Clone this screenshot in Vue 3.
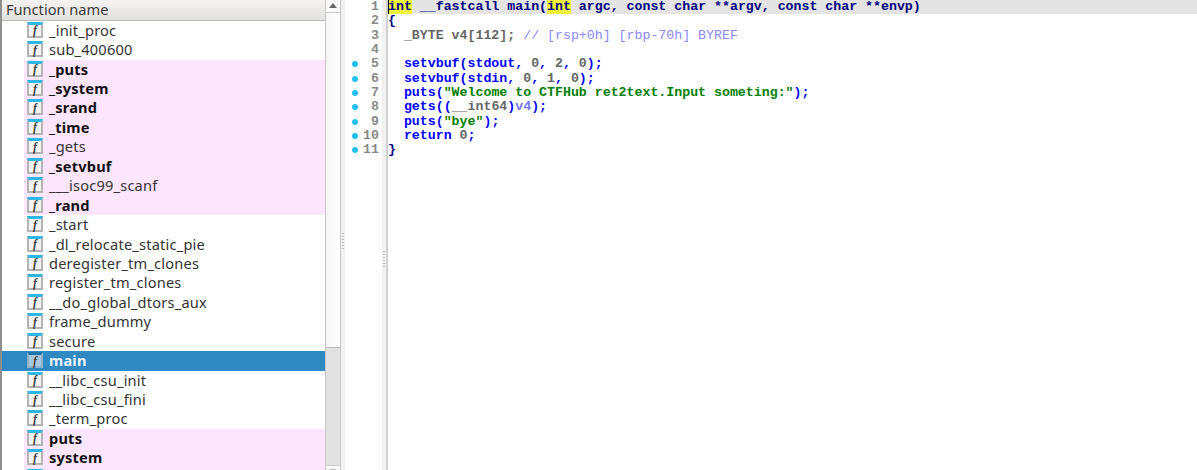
<script setup>
const fns = [
  ['_init_proc', ''], ['sub_400600', ''], ['_puts', 'ext'], ['_system', 'ext'], ['_srand', 'ext'],
  ['_time', 'ext'], ['_gets', 'pink'], ['_setvbuf', 'ext'], ['___isoc99_scanf', 'pink'], ['_rand', 'ext'],
  ['_start', ''], ['_dl_relocate_static_pie', ''], ['deregister_tm_clones', ''], ['register_tm_clones', ''],
  ['__do_global_dtors_aux', ''], ['frame_dummy', ''], ['secure', ''], ['main', 'sel'], ['__libc_csu_init', ''],
  ['__libc_csu_fini', ''], ['_term_proc', ''], ['puts', 'ext'], ['system', 'ext'], ['', 'ext']
]
const k = 'k', c = 'c', s = 's', g = 'g', d = 'd', y = 'y', l = 'l'
const lines = [
  { dot: false, cur: true, t: [['int', y], [' __fastcall main(', d], ['int', y], [' argc, const char **argv, const char **envp)', d]] },
  { dot: false, t: [['{', d]] },
  { dot: false, t: [['  _BYTE v4[112]; ', g], ['// [rsp+0h] [rbp-70h] BYREF', c]] },
  { dot: false, t: [] },
  { dot: true, t: [['  setvbuf(stdout, ', k], ['0', g], [', ', k], ['2', g], [', ', k], ['0', g], [');', k]] },
  { dot: true, t: [['  setvbuf(stdin, ', k], ['0', g], [', ', k], ['1', g], [', ', k], ['0', g], [');', k]] },
  { dot: true, t: [['  puts(', k], ['"Welcome to CTFHub ret2text.Input someting:"', s], [');', k]] },
  { dot: true, t: [['  gets((', k], ['__int64', g], [')', k], ['v4', l], [');', k]] },
  { dot: true, t: [['  puts(', k], ['"bye"', s], [');', k]] },
  { dot: true, t: [['  return ', k], ['0', g], [';', k]] },
  { dot: true, t: [['}', d]] }
]
</script>

<template>
  <div class="app">
    <section class="left">
      <div class="list">
        <header class="head">Function name</header>
        <div class="rows">
          <div v-for="(f, i) in fns" :key="i" class="row" :class="f[1]">
            <span class="ico"><i v-if="f[0]">f</i></span>
            <span class="name">{{ f[0] }}</span>
          </div>
        </div>
      </div>
      <div class="bar">
        <div class="btn up"></div>
        <div class="thumb"></div>
        <div class="track"></div>
        <div class="btn down"></div>
      </div>
    </section>
    <div class="split"><span v-for="n in 6" :key="n"></span></div>
    <section class="code">
      <div v-for="(ln, i) in lines" :key="i" class="ln" :class="{ cur: ln.cur }">
        <span class="dotc"><b v-if="ln.dot"></b></span>
        <span class="num">{{ i + 1 }}</span>
        <span class="sep"></span>
        <span class="txt"><span v-if="ln.cur" class="caret"></span><span v-for="(p, j) in ln.t" :key="j" :class="p[1]">{{ p[0] }}</span></span>
      </div>
      <div class="fill"><span class="sep band"><span v-for="n in 6" :key="n"></span></span></div>
    </section>
  </div>
</template>

<style>
html, body { margin: 0; background: #fff; overflow: hidden; }
</style>

<style scoped>
.app { display: flex; width: 1197px; height: 470px; overflow: hidden; background: #fff; }
.left { display: flex; width: 341px; flex: none; height: 470px; }
.list { width: 325px; flex: none; display: flex; flex-direction: column; border-left: 2px solid #8f8f8f; box-sizing: border-box; overflow: hidden; }
.head { height: 20px; flex: none; background: linear-gradient(#f4f3f2, #e3e1df); border-bottom: 1px solid #bdbbb9; font: 14.6px/19px "Noto Sans", "Open Sans", sans-serif; color: #3c3c3c; padding-left: 4px; }
.rows { flex: 1; overflow: hidden; }
.row { height: 19.44px; display: flex; align-items: center; padding-left: 25px; font: 14.6px "Noto Sans", "Open Sans", sans-serif; letter-spacing: 0.2px; color: #333; white-space: nowrap; }
.name { margin-top: -2px; }
.row.ext, .row.pink { background: linear-gradient(90deg, #fff 22px, #fde5fd 22px); }
.row.ext .name { font-weight: 700; color: #111; }
.row.sel { background: #2f8ac4; color: #e8f3fa; font-weight: 700; }
.ico { width: 16px; height: 16px; box-sizing: border-box; border: 2px solid #b4b4b4; border-top: 3px solid #2bb8e8; background: #f4f4f4; display: flex; align-items: center; justify-content: center; margin: -2px 6px 0 0; flex: none; }
.ico i { font: italic 700 12px/10px "Liberation Serif", serif; color: #444; }
.row.sel .ico { background: #a9c8de; border-color: #8fb3cc; border-top-color: #1f74aa; }
.bar { width: 16px; flex: none; display: flex; flex-direction: column; background: #e2e2e2; border-left: 1px solid #c6c6c6; border-right: 1px solid #c6c6c6; box-sizing: border-box; }
.btn { flex: none; background: #f8f8f8; position: relative; overflow: hidden; }
.btn.up { height: 13px; border-bottom: 1px solid #cccccc; box-sizing: border-box; }
.btn.up::after { content: ""; position: absolute; left: 3px; top: 3px; border: 4px solid transparent; border-top: 0; border-bottom: 5px solid #666; }
.btn.down { height: 5px; border-top: 1px solid #cccccc; box-sizing: border-box; }
.btn.down::after { content: ""; position: absolute; left: 4px; top: 3px; width: 6px; height: 1px; background: #bbb; }
.thumb { height: 335px; flex: none; background: linear-gradient(90deg, #f6f6f6, #ffffff); border-bottom: 1px solid #b8b8b8; box-sizing: border-box; }
.track { flex: 1; }
.split { width: 4px; flex: none; background: #f1f1f1; display: flex; flex-direction: column; gap: 2px; align-items: center; justify-content: center; height: 470px; box-sizing: border-box; padding-top: 12px; }
.split span { width: 2px; height: 1px; background: #bcbcbc; }
.code { flex: 1; display: flex; flex-direction: column; font: 700 13.25px/14.33px "Liberation Mono", monospace; }
.ln { display: flex; height: 14.33px; white-space: pre; }
.ln.cur { background: #e4e4e4; }
.dotc { width: 10px; flex: none; position: relative; background: #fff; }
.dotc b { position: absolute; left: 7px; top: 4px; width: 6px; height: 6px; border-radius: 50%; background: #25c0f2; }
.num { width: 24px; flex: none; text-align: right; color: #8a8a8a; background: #fff; padding-right: 1px; }
.sep { width: 8px; flex: none; box-sizing: border-box; background: #f1f1f1; border-left: 2px solid #fff; border-right: 2px solid #d0d0d0; }
.txt { flex: 1; position: relative; color: #303b85; }
.caret { position: absolute; left: 0; top: 0; width: 1px; height: 14px; background: #000; }
.y { background: #f1f13a; color: #000080; }
.d { color: #000080; }
.g { color: #666; }
.c { color: #8888ff; font-weight: 400; }
.k { color: #0000ff; }
.s { color: #008000; }
.l { color: #7777ee; }
.fill { flex: 1; display: flex; padding-left: 35px; }
.band { display: flex; flex-direction: column; gap: 2px; align-items: center; padding-top: 93px; }
.band span { width: 2px; height: 1px; background: #bcbcbc; }
</style>
